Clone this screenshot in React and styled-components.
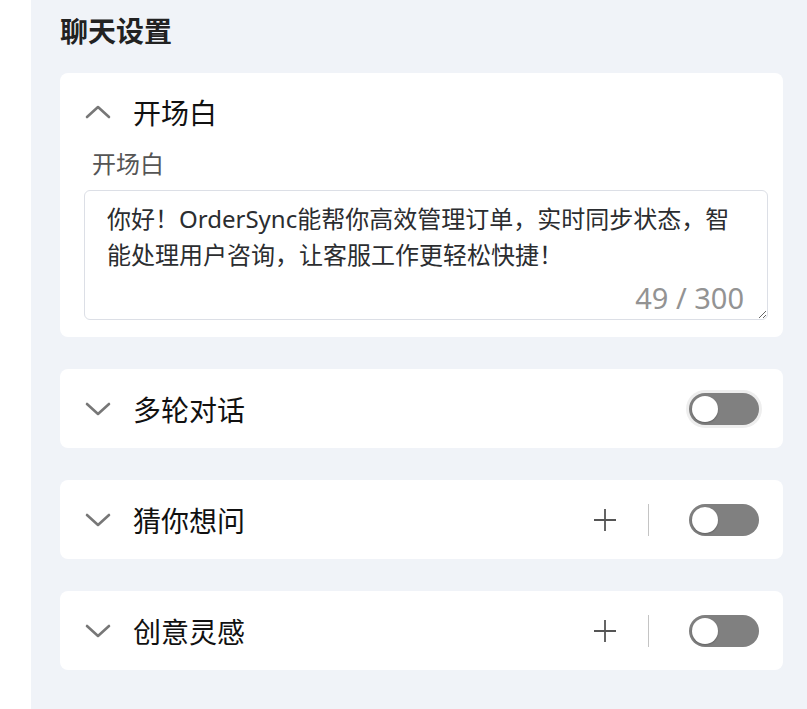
import React, { useState } from 'react';
import styled, { createGlobalStyle } from 'styled-components';

const GlobalStyle = createGlobalStyle`
	html, body {
		margin: 0;
		padding: 0;
		background: #ffffff;
	}
	body {
		font-family: "Noto Sans", "Noto Sans CJK SC", sans-serif;
	}
`;

const Page = styled.div`
	display: flex;
	min-height: 709px;
`;

const Side = styled.div`
	width: 31px;
	flex-shrink: 0;
	background: #ffffff;
`;

const Main = styled.main`
	flex: 1;
	background: #f0f3f8;
	padding: 10px 24px 30px 29px;
	display: flex;
	flex-direction: column;
	gap: 32px;
`;

const Title = styled.h2`
	margin: 0 0 -9px;
	font-size: 28px;
	line-height: 40px;
	font-weight: 700;
	color: #222;
	font-family: "Noto Sans CJK SC", sans-serif;
`;

const Card = styled.section`
	background: #ffffff;
	border-radius: 8px;
	padding: ${ p => p.$open ? '0 15px 17px 24px' : '0 24px 0 24px' };
`;

const Header = styled.div`
	display: flex;
	align-items: center;
	height: ${ p => p.$open ? '78px' : '79px' };
	padding-right: ${ p => p.$open ? '9px' : '0' };
`;

const ChevronSvg = styled.svg`
	width: 26px;
	height: 14px;
	margin-left: 1px;
	flex-shrink: 0;
`;

const HeadTitle = styled.span`
	margin-left: 22px;
	font-size: 28px;
	color: #111;
	font-family: "Noto Sans CJK SC", sans-serif;
	flex: 1;
`;

const Actions = styled.div`
	display: flex;
	align-items: center;
`;

const PlusButton = styled.button`
	border: 0;
	background: none;
	padding: 0;
	width: 24px;
	height: 24px;
	margin-right: 31px;
	display: flex;
	cursor: pointer;
`;

const Divider = styled.span`
	width: 1.5px;
	height: 32px;
	background: #c4c4c4;
	margin-right: 40px;
`;

const Switch = styled.button`
	position: relative;
	width: 70px;
	height: 32px;
	border: 0;
	padding: 0;
	border-radius: 16px;
	background: #808080;
	box-shadow: ${ p => p.$focus ? '0 0 0 3px #eeeeee' : 'none' };
	cursor: pointer;

	&::after {
		content: '';
		position: absolute;
		top: 3px;
		left: ${ p => p.$on ? '41px' : '3px' };
		width: 26px;
		height: 26px;
		border-radius: 50%;
		background: #fff;
		box-shadow: 0 1px 2px rgba(0, 0, 0, 0.25);
	}
`;

const Label = styled.div`
	font-size: 24px;
	line-height: 24px;
	color: #555;
	margin: 0 0 15px 8px;
	font-family: "Noto Sans CJK SC", sans-serif;
`;

const Field = styled.div`
	position: relative;
`;

const TextArea = styled.textarea`
	display: block;
	box-sizing: border-box;
	width: 100%;
	height: 130px;
	border: 1px solid #dcdfe6;
	border-radius: 6px;
	padding: 10px 36px 10px 22px;
	font-size: 24px;
	line-height: 36px;
	color: #2b2d30;
	font-family: "Noto Sans", "Noto Sans CJK SC", sans-serif;
	outline: none;
	resize: both;
`;

const Count = styled.span`
	position: absolute;
	right: 24px;
	bottom: 4px;
	font-size: 29px;
	line-height: 36px;
	color: #939393;
	font-family: "Noto Sans", sans-serif;
`;

function Chevron({ up }) {
	return (
		<ChevronSvg viewBox='0 0 26 14' fill='none' stroke='#777' strokeWidth='2.6' strokeLinecap='round' strokeLinejoin='round'>
			{ up ? <path d='M2 12 L13 2 L24 12' /> : <path d='M2 2 L13 12 L24 2' /> }
		</ChevronSvg>
	);
}

function Plus() {
	return (
		<svg width='24' height='24' viewBox='0 0 24 24' fill='none' stroke='#555' strokeWidth='1.8'>
			<path d='M12 1 V23 M1 12 H23' />
		</svg>
	);
}

function SettingRow({ title, withAdd, focus }) {
	const [on, setOn] = useState(false);
	return (
		<Card>
			<Header>
				<Chevron />
				<HeadTitle>{ title }</HeadTitle>
				<Actions>
					{ withAdd && (
						<>
							<PlusButton aria-label='添加'><Plus /></PlusButton>
							<Divider />
						</>
					) }
					<Switch $on={ on } $focus={ focus } onClick={ () => setOn(!on) } />
				</Actions>
			</Header>
		</Card>
	);
}

export default function App() {
	const [text, setText] = useState('你好！OrderSync能帮你高效管理订单，实时同步状态，智能处理用户咨询，让客服工作更轻松快捷！');

	return (
		<>
			<GlobalStyle />
			<Page>
				<Side />
				<Main>
					<Title>聊天设置</Title>
					<Card $open>
						<Header $open>
							<Chevron up />
							<HeadTitle>开场白</HeadTitle>
						</Header>
						<Label>开场白</Label>
						<Field>
							<TextArea value={ text } maxLength={ 300 } onChange={ e => setText(e.target.value) } />
							<Count>{ text.length } / 300</Count>
						</Field>
					</Card>
					<SettingRow title='多轮对话' focus />
					<SettingRow title='猜你想问' withAdd />
					<SettingRow title='创意灵感' withAdd />
				</Main>
			</Page>
		</>
	);
}
